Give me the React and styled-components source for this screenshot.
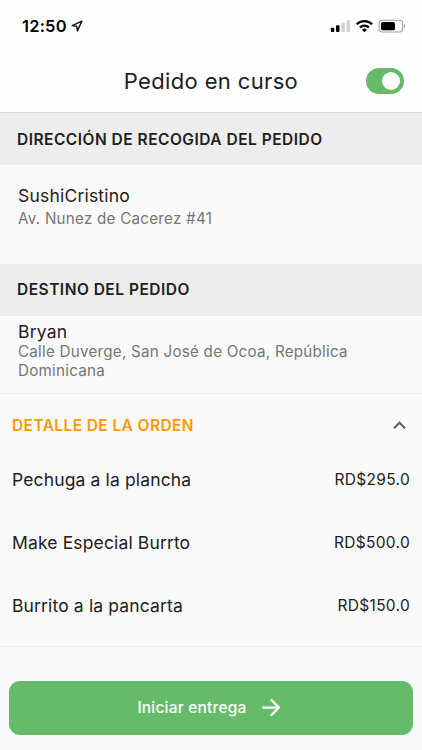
import { useState } from "react";
import styled, { createGlobalStyle } from "styled-components";

const orderItems = [
  { id: 1, name: "Pechuga a la plancha", price: "RD$295.0" },
  { id: 2, name: "Make Especial Burrto", price: "RD$500.0" },
  { id: 3, name: "Burrito a la pancarta", price: "RD$150.0" },
];

const StatusBar = () => {
  return (
    <StatusWrap>
      <Clock>12:50</Clock>
      <LocationIcon viewBox="0 0 12 12">
        <path d="M10.9 1.1 1.2 5.6 5.7 6.3 6.4 10.9Z" />
      </LocationIcon>
      <StatusIcons viewBox="0 0 76 14">
        {/* signal */}
        <rect x="0.8" y="8.8" width="3.5" height="4.2" rx="0.9" />
        <rect x="6" y="6.2" width="3.5" height="6.8" rx="0.9" />
        <rect x="11.3" y="3.6" width="3.5" height="9.4" rx="0.9" fill="#d2d2d2" />
        <rect x="16.5" y="1" width="3.5" height="12" rx="0.9" fill="#d2d2d2" />
        {/* wifi */}
        <g fill="none" stroke="#000" strokeWidth="2.3">
          <path d="M26.7 5.3a10.8 10.8 0 0 1 15.4 0" />
          <path d="M29.9 8.5a6.4 6.4 0 0 1 9 0" />
        </g>
        <path d="M34.4 13.2 31.9 10.8a3.6 3.6 0 0 1 5 0Z" />
        {/* battery */}
        <rect x="49.1" y="1.2" width="23.6" height="11.8" rx="3.2" fill="none" stroke="#a0a0a0" strokeWidth="1.1" />
        <rect x="51" y="3" width="14" height="8.2" rx="1.5" />
        <path d="M74 5v4.2c1.6-.6 1.6-3.6 0-4.2Z" fill="#999" />
      </StatusIcons>
    </StatusWrap>
  );
};

const App = () => {
  //switch del pedido
  const [isActive, setIsActive] = useState(true);

  //lista de la orden abierta o cerrada
  const [isOpen, setIsOpen] = useState(true);

  return (
    <>
      <GlobalStyle />
      <Container>
        <Header>
          <StatusBar />
          <TitleBar>
            <Title>Pedido en curso</Title>
            <Switch
              role="switch"
              aria-checked={isActive}
              $on={isActive}
              onClick={() => setIsActive(!isActive)}
            >
              <Knob />
            </Switch>
          </TitleBar>
        </Header>

        <SectionTitle>DIRECCIÓN DE RECOGIDA DEL PEDIDO</SectionTitle>
        <Place $height="98.5px" $top="20px">
          <PlaceName>SushiCristino</PlaceName>
          <Address $gap="3px">Av. Nunez de Cacerez #41</Address>
        </Place>

        <SectionTitle>DESTINO DEL PEDIDO</SectionTitle>
        <Place $height="77px" $top="5px">
          <PlaceName>Bryan</PlaceName>
          <Address>Calle Duverge, San José de Ocoa, República Dominicana</Address>
        </Place>

        <Order>
          <OrderHeader onClick={() => setIsOpen(!isOpen)}>
            <OrderTitle>DETALLE DE LA ORDEN</OrderTitle>
            <Chevron viewBox="0 0 24 24" $open={isOpen}>
              <path d="M12 8l-6 6 1.41 1.41L12 10.83l4.59 4.58L18 14z" />
            </Chevron>
          </OrderHeader>
          {isOpen &&
            orderItems.map((item) => (
              <OrderRow key={item.id}>
                <ItemName>{item.name}</ItemName>
                <ItemPrice>{item.price}</ItemPrice>
              </OrderRow>
            ))}
        </Order>

        <Footer>
          <StartBtn>
            Iniciar entrega
            <ArrowIcon viewBox="0 0 24 24">
              <path d="M12 4l-1.41 1.41L16.17 11H4v2h12.17l-5.58 5.59L12 20l8-8z" />
            </ArrowIcon>
          </StartBtn>
        </Footer>
      </Container>
    </>
  );
};
export default App;

const GlobalStyle = createGlobalStyle`
  * {
    box-sizing: border-box;
  }
  body {
    margin: 0;
    background-color: #fafafa;
    font-family: Inter, "Liberation Sans", sans-serif;
    color: #212121;
  }
  button {
    font-family: inherit;
    border: none;
    padding: 0;
    cursor: pointer;
  }
`;

const Container = styled.div`
  width: 422px;
  height: 750px;
  display: flex;
  flex-direction: column;
  overflow: hidden;
  background-color: #fafafa;
`;

const Header = styled.header`
  height: 113px;
  flex: none;
  background-color: #fefefe;
  border-bottom: 1px solid #d6d6d6;
`;

const StatusWrap = styled.div`
  height: 50px;
  padding: 2px 16px 0 22px;
  display: flex;
  align-items: center;
`;

const Clock = styled.div`
  width: 49px;
  font-size: 16.5px;
  font-weight: 600;
  letter-spacing: 0.2px;
  color: #000;
`;

const LocationIcon = styled.svg`
  width: 12px;
  height: 12px;
  fill: none;
  stroke: #111;
  stroke-width: 1.4;
  stroke-linejoin: round;
`;

const StatusIcons = styled.svg`
  width: 76px;
  height: 14px;
  margin-left: auto;
`;

const TitleBar = styled.div`
  height: 62px;
  padding: 0 18px 0 56px;
  display: flex;
  align-items: center;
`;

const Title = styled.h1`
  flex: 1;
  margin: 0;
  font-size: 22px;
  line-height: 28px;
  font-weight: 400;
  letter-spacing: 0.35px;
  text-align: center;
  white-space: nowrap;
`;

const Switch = styled.button`
  width: 38px;
  height: 26px;
  padding: 0 4px;
  border-radius: 13px;
  display: flex;
  align-items: center;
  justify-content: ${(props) => (props.$on ? "flex-end" : "flex-start")};
  background-color: ${(props) => (props.$on ? "#66bb6a" : "#cccccc")};
`;

const Knob = styled.span`
  width: 18px;
  height: 18px;
  border-radius: 50%;
  background-color: white;
`;

const SectionTitle = styled.h2`
  height: 52px;
  flex: none;
  margin: 0;
  padding: 0 17px;
  display: flex;
  align-items: center;
  font-size: 15.5px;
  font-weight: 600;
  letter-spacing: 0.49px;
  white-space: nowrap;
  background-color: #ededed;
`;

const Place = styled.div`
  height: ${(props) => props.$height};
  flex: none;
  padding: ${(props) => props.$top} 60px 0 18px;
`;

const PlaceName = styled.div`
  font-size: 17.5px;
  line-height: 21px;
  letter-spacing: 0.2px;
`;

const Address = styled.div`
  margin-top: ${(props) => props.$gap || "0"};
  font-size: 15.2px;
  line-height: 19px;
  letter-spacing: 0.24px;
  color: #757575;
`;

const Order = styled.div`
  border-top: 1px solid #ececec;
  border-bottom: 1px solid #ececec;
`;

const OrderHeader = styled.div`
  height: 63px;
  padding: 0 10px 0 12px;
  display: flex;
  align-items: center;
  justify-content: space-between;
  cursor: pointer;
`;

const OrderTitle = styled.div`
  font-size: 15.5px;
  font-weight: 600;
  letter-spacing: 0.4px;
  color: #ff9800;
`;

const Chevron = styled.svg`
  width: 25px;
  height: 25px;
  fill: #616161;
  transform: ${(props) => (props.$open ? "none" : "rotate(180deg)")};
`;

const OrderRow = styled.div`
  height: 63px;
  padding: 0 12px 18px;
  display: flex;
  align-items: center;
  justify-content: space-between;
`;

const ItemName = styled.div`
  font-size: 17.5px;
  letter-spacing: 0.14px;
`;

const ItemPrice = styled.div`
  font-size: 15.5px;
  letter-spacing: 0.3px;
`;

const Footer = styled.div`
  margin-top: auto;
  padding: 0 9px 15px;
`;

const StartBtn = styled.button`
  width: 100%;
  height: 54px;
  padding-bottom: 1px;
  border-radius: 11px;
  display: flex;
  align-items: center;
  justify-content: center;
  gap: 11px;
  font-size: 15.5px;
  font-weight: 500;
  letter-spacing: 0.2px;
  color: white;
  background-color: #66bb6a;
`;

const ArrowIcon = styled.svg`
  width: 27px;
  height: 27px;
  fill: white;
`;
